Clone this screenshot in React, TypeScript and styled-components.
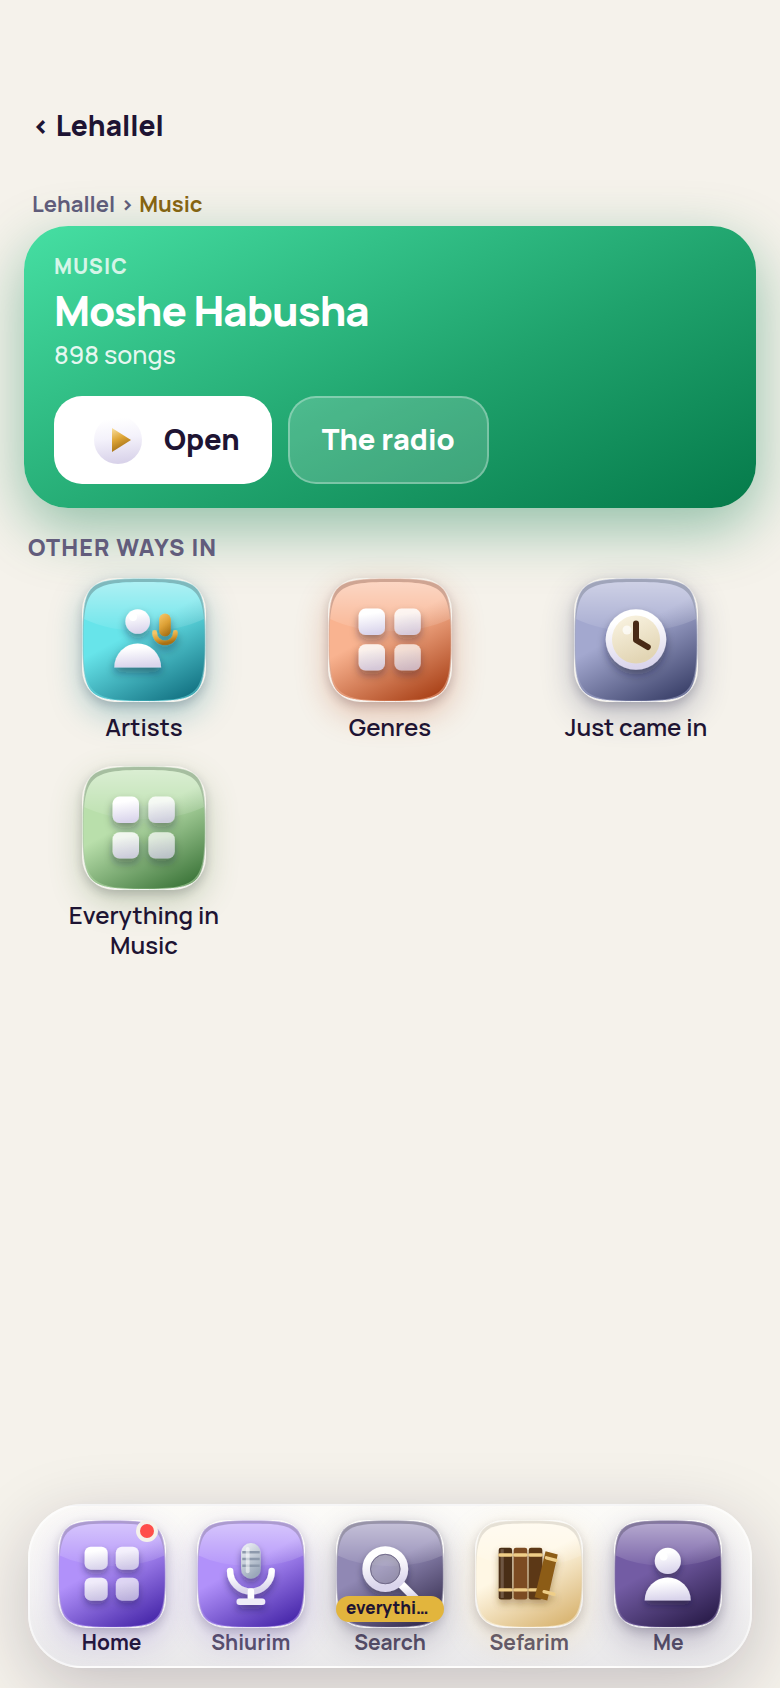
import React, { useId } from "react";
import styled, { createGlobalStyle } from "styled-components";

const GlobalStyle = createGlobalStyle`
  * {
    box-sizing: border-box;
  }

  body {
    margin: 0;
    background: #f5f2eb;
    color: #1e1433;
    font-family: Manrope, Inter, "Noto Sans", sans-serif;
  }

  a {
    color: inherit;
    text-decoration: none;
  }
`;

const Page = styled.div`
  display: flex;
  flex-direction: column;
  min-height: 100vh;
  overflow: hidden;
`;

const Header = styled.header`
  padding: 106px 32px 0;
`;

const BackLink = styled.a`
  font-size: 28px;
  line-height: 38px;
  font-weight: 800;
`;

const Breadcrumb = styled.nav`
  display: flex;
  gap: 5px;
  padding: 45px 32px 7px;
  font-size: 22px;
  line-height: 30px;
  font-weight: 700;
  color: #625c7c;
`;

const Current = styled.span`
  color: #8a6410;
`;

const Hero = styled.section`
  margin: 0 24px;
  padding: 26px 30px 24px;
  border-radius: 44px;
  color: #fff;
  background: linear-gradient(155deg, #46dfa3 0%, #1fa26c 58%, #057a4a 100%);
  box-shadow: 0 20px 60px rgba(5, 122, 74, 0.42);
`;

const Eyebrow = styled.p`
  margin: 0;
  font-size: 21px;
  line-height: 28px;
  font-weight: 800;
  letter-spacing: 0.05em;
  color: rgba(255, 255, 255, 0.78);
`;

const HeroTitle = styled.h1`
  margin: 0;
  font-size: 42px;
  line-height: 60px;
  font-weight: 800;
  letter-spacing: -1px;
`;

const HeroMeta = styled.p`
  margin: 0;
  font-size: 25px;
  line-height: 30px;
  font-weight: 500;
  color: rgba(255, 255, 255, 0.88);
`;

const HeroActions = styled.div`
  display: flex;
  gap: 16px;
  margin-top: 26px;
`;

const HeroButton = styled.button<{ $ghost?: boolean }>`
  display: flex;
  align-items: center;
  gap: 14px;
  height: 88px;
  padding: 0 32px 2px;
  border: ${({ $ghost }) =>
    $ghost ? "2px solid rgba(255, 255, 255, 0.3)" : "none"};
  border-radius: 28px;
  background: ${({ $ghost }) => ($ghost ? "rgba(255, 255, 255, 0.18)" : "#fff")};
  color: ${({ $ghost }) => ($ghost ? "#fff" : "#1e1433")};
  font-family: inherit;
  font-size: 29px;
  font-weight: 800;
  cursor: pointer;
`;

const SectionTitle = styled.h2`
  margin: 24px 28px 0;
  font-size: 23px;
  line-height: 30px;
  font-weight: 800;
  letter-spacing: 0.05em;
  text-transform: uppercase;
  color: #625c7c;
`;

const Grid = styled.main`
  display: grid;
  grid-template-columns: repeat(3, 1fr);
  gap: 24px 14px;
  padding: 16px 28px 40px;
`;

const GridItem = styled.a`
  display: flex;
  flex-direction: column;
  align-items: center;
  gap: 10px;
`;

const GridLabel = styled.span`
  max-width: 180px;
  font-size: 24px;
  line-height: 30px;
  font-weight: 600;
  text-align: center;
`;

const TileSvg = styled.svg<{ $size: number; $glow: string }>`
  display: block;
  width: ${({ $size }) => $size}px;
  height: ${({ $size }) => $size}px;
  border-radius: 26%;
  overflow: visible;
  box-shadow: 0 4px 10px rgba(30, 20, 51, 0.18), 0 12px 32px ${({ $glow }) => $glow};
`;

const TabBar = styled.nav`
  display: flex;
  margin: auto 28px 20px;
  padding: 14px 12px 10px;
  border: 2px solid rgba(255, 255, 255, 0.6);
  border-radius: 54px;
  background: linear-gradient(180deg, #fcfbf8 0%, #f5f4f4 50%, #e9e8ea 100%);
  box-shadow: 0 20px 70px rgba(30, 20, 51, 0.22);
`;

const Tab = styled.a<{ $active?: boolean }>`
  flex: 1;
  display: flex;
  flex-direction: column;
  align-items: center;
  color: ${({ $active }) => ($active ? "#1e1433" : "#575068")};
  font-size: 21px;
  line-height: 28px;
  font-weight: 700;
`;

const TabIcon = styled.span`
  position: relative;
  display: block;
`;

const Dot = styled.span`
  position: absolute;
  top: 0;
  right: 8px;
  width: 22px;
  height: 22px;
  border: 4px solid #f5f2eb;
  border-radius: 50%;
  background: #ff4f4b;
`;

const ScopePill = styled.span`
  position: absolute;
  right: 0;
  bottom: 6px;
  left: 0;
  padding: 0 10px 2px;
  border-radius: 13px;
  background: #e2b53d;
  color: #1e1433;
  font-size: 17px;
  line-height: 24px;
  font-weight: 800;
  white-space: nowrap;
`;

type Palette = {
  light: string;
  dark: string;
  rim: string;
  glow: string;
};

const palettes: Record<string, Palette> = {
  teal: { light: "#67e4ea", dark: "#0e6b7c", rim: "#7fb9bd", glow: "rgba(20, 120, 135, 0.34)" },
  orange: { light: "#f9b390", dark: "#a43a10", rim: "#cfa593", glow: "rgba(190, 80, 35, 0.32)" },
  slate: { light: "#a3a8cf", dark: "#343a63", rim: "#a0a5ba", glow: "rgba(60, 65, 105, 0.32)" },
  green: { light: "#b9dfab", dark: "#356f33", rim: "#a6bea0", glow: "rgba(85, 125, 65, 0.3)" },
  violet: { light: "#b191fa", dark: "#4020a4", rim: "#ac9bcf", glow: "rgba(90, 60, 190, 0.24)" },
  plum: { light: "#9088b4", dark: "#2c2444", rim: "#9894a8", glow: "rgba(50, 40, 80, 0.28)" },
  cream: { light: "#fff7e4", dark: "#d6b06a", rim: "#e5e0d5", glow: "rgba(225, 185, 105, 0.28)" },
  indigo: { light: "#735ca4", dark: "#251844", rim: "#84799d", glow: "rgba(50, 35, 90, 0.28)" },
};

type GlyphName = "artist" | "grid" | "clock" | "mic" | "search" | "books" | "person";

function Glyph({ name, id }: { name: GlyphName; id: string }) {
  const white = `url(#${id}-white)`;
  const gold = `url(#${id}-gold)`;

  switch (name) {
    case "artist":
      return (
        <>
          <circle cx="55.7" cy="43.5" r="12.3" fill={white} />
          <circle cx="51" cy="39" r="4" fill="#fff" />
          <path d="M32.3 89.5a23.4 24 0 0 1 46.8 0z" fill={white} />
          <rect x="77.2" y="35.5" width="11.6" height="23" rx="5.8" fill={gold} />
          <path d="M72.6 54.5a10.4 10.4 0 0 0 20.8 0" fill="none" stroke={gold} strokeWidth="4.8" strokeLinecap="round" />
        </>
      );
    case "grid":
      return (
        <>
          <rect x="30.6" y="30.6" width="26.4" height="26.4" rx="7" fill={white} />
          <rect x="66.4" y="30.6" width="26.4" height="26.4" rx="7" fill={white} opacity="0.84" />
          <rect x="30.6" y="66.2" width="26.4" height="26.4" rx="7" fill={white} opacity="0.84" />
          <rect x="66.4" y="66.2" width="26.4" height="26.4" rx="7" fill={white} opacity="0.7" />
        </>
      );
    case "clock":
      return (
        <>
          <circle cx="62" cy="61.5" r="30.3" fill={white} />
          <circle cx="62" cy="61.5" r="24" fill={`url(#${id}-face)`} />
          <circle cx="53" cy="52" r="4.5" fill="#fff" opacity="0.7" />
          <path d="M62 45.5V62l11.8 7" fill="none" stroke="#4a2c14" strokeWidth="6" strokeLinecap="round" strokeLinejoin="round" />
        </>
      );
    case "mic":
      return (
        <>
          <rect x="50.6" y="26.4" width="22.6" height="41" rx="11.3" fill={`url(#${id}-steel)`} />
          <path d="M52 37h20M52 44.7h20M52 52.6h20" stroke="#8d99ac" strokeWidth="3" />
          <rect x="56" y="31" width="4.4" height="30" rx="2.2" fill="#fff" opacity="0.55" />
          <path d="M38 58.4a23.9 23.9 0 0 0 47.8 0" fill="none" stroke={white} strokeWidth="7.4" strokeLinecap="round" />
          <rect x="58.2" y="78.5" width="7.4" height="15" rx="3" fill="#fff" />
          <rect x="45.4" y="90" width="33" height="7.6" rx="3.8" fill="#efecf8" />
        </>
      );
    case "search":
      return (
        <>
          <circle cx="56.6" cy="56.3" r="18" fill="#fff" opacity="0.2" />
          <path d="M73 72l18 18" stroke={white} strokeWidth="9" strokeLinecap="round" />
          <circle cx="56.6" cy="56.3" r="21.8" fill="none" stroke={white} strokeWidth="9" />
          <circle cx="56.6" cy="56.3" r="17" fill="none" stroke="#6c6685" strokeWidth="1" />
        </>
      );
    case "books":
      return (
        <>
          <rect x="27.2" y="31.8" width="15.4" height="59.4" rx="2.6" fill="#4a2d15" />
          <rect x="29.4" y="33.5" width="3.6" height="56" fill="#fff" opacity="0.2" />
          <rect x="44.4" y="31.8" width="15.6" height="59.4" rx="2.6" fill="#7c4b22" />
          <rect x="61.7" y="31.8" width="15.6" height="59.4" rx="2.6" fill="#5c3914" />
          <path d="M28.5 40.2h13M45.7 40.2h13M63 40.2h13M28.5 80.3h13M45.7 80.3h13M63 80.3h13" stroke="#efce88" strokeWidth="3.8" strokeLinecap="round" />
          <path d="M81 36l14 3.6-12 52.8-14.5-3.6z" fill="#8c5b16" />
          <path d="M82 43.4l11 3M79.3 82.2l11.4 3" stroke="#efce88" strokeWidth="3.8" strokeLinecap="round" />
        </>
      );
    default:
      return (
        <>
          <circle cx="61.8" cy="47" r="15" fill={white} />
          <circle cx="57" cy="42" r="4.5" fill="#fff" />
          <path d="M35.3 92.3a26.4 26.4 0 0 1 52.8 0z" fill={white} />
        </>
      );
  }
}

type TileProps = {
  glyph: GlyphName;
  palette: string;
  size: number;
};

const OUTER =
  "M62 0.5C119 0.5 123.5 5 123.5 62C123.5 119 119 123.5 62 123.5C5 123.5 0.5 119 0.5 62C0.5 5 5 0.5 62 0.5Z";
const INNER =
  "M62 4C115 4 122.5 10 122.5 62C122.5 116 116 122.5 62 122.5C8 122.5 1.5 116 1.5 62C1.5 10 9 4 62 4Z";

function Tile({ glyph, palette, size }: TileProps) {
  const id = useId().replace(/[^a-zA-Z0-9]/g, "");
  const { light, dark, rim, glow } = palettes[palette];

  return (
    <TileSvg viewBox="0 0 124 124" $size={size} $glow={glow} aria-hidden="true">
      <defs>
        <linearGradient id={`${id}-body`} x1="0.22" y1="0" x2="0.8" y2="1.06">
          <stop offset="0.38" stopColor={light} />
          <stop offset="1" stopColor={dark} />
        </linearGradient>
        <linearGradient id={`${id}-rim`} x1="0" y1="0" x2="0" y2="1">
          <stop offset="0.1" stopColor={rim} />
          <stop offset="0.7" stopColor={rim} stopOpacity="0.6" />
          <stop offset="1" stopColor={light} stopOpacity="0.5" />
        </linearGradient>
        <linearGradient id={`${id}-edge`} x1="0" y1="0" x2="0" y2="1">
          <stop offset="0" stopColor="#fff" stopOpacity="0.45" />
          <stop offset="0.6" stopColor="#fff" stopOpacity="0.35" />
          <stop offset="1" stopColor="#fff" stopOpacity="0.85" />
        </linearGradient>
        <linearGradient id={`${id}-gloss`} x1="0" y1="0" x2="0" y2="1">
          <stop offset="0" stopColor="#fff" stopOpacity="0.5" />
          <stop offset="1" stopColor="#fff" stopOpacity="0.06" />
        </linearGradient>
        <linearGradient id={`${id}-white`} x1="0" y1="0" x2="0.15" y2="1">
          <stop offset="0.25" stopColor="#fff" />
          <stop offset="1" stopColor="#dad5ec" />
        </linearGradient>
        <linearGradient id={`${id}-gold`} x1="0.2" y1="0" x2="0.6" y2="1">
          <stop offset="0" stopColor="#f5c566" />
          <stop offset="0.5" stopColor="#dda136" />
          <stop offset="1" stopColor="#a87014" />
        </linearGradient>
        <linearGradient id={`${id}-face`} x1="0" y1="0" x2="0.4" y2="1">
          <stop offset="0" stopColor="#fbf5e4" />
          <stop offset="1" stopColor="#e2d5b4" />
        </linearGradient>
        <linearGradient id={`${id}-steel`} x1="0" y1="0" x2="0.5" y2="1">
          <stop offset="0" stopColor="#f4f6fa" />
          <stop offset="1" stopColor="#9ba8ba" />
        </linearGradient>
        <clipPath id={`${id}-clip`}>
          <path d={INNER} />
        </clipPath>
        <filter id={`${id}-shadow`} x="-30%" y="-30%" width="160%" height="180%">
          <feDropShadow dx="0" dy="5" stdDeviation="4.5" floodColor={palette === "cream" ? "#6d4a1b" : "#1e1433"} floodOpacity="0.42" />
        </filter>
      </defs>
      <path d={OUTER} fill={`url(#${id}-body)`} />
      <path d={OUTER} fill={`url(#${id}-rim)`} stroke={`url(#${id}-edge)`} />
      <path d={INNER} fill={`url(#${id}-body)`} />
      <g clipPath={`url(#${id}-clip)`}>
        <path d="M0 0H124V40Q98 53 62 53T0 40Z" fill={`url(#${id}-gloss)`} />
      </g>
      <g filter={`url(#${id}-shadow)`}>
        <Glyph name={glyph} id={id} />
      </g>
    </TileSvg>
  );
}

function PlayIcon() {
  return (
    <svg width="64" height="64" viewBox="0 0 64 64" aria-hidden="true">
      <defs>
        <linearGradient id="play-disc" x1="0" y1="0" x2="0.1" y2="1">
          <stop offset="0.1" stopColor="#fff" />
          <stop offset="0.5" stopColor="#f4f2fb" />
          <stop offset="1" stopColor="#d9d3ea" />
        </linearGradient>
        <linearGradient id="play-arrow" x1="0" y1="0" x2="0.35" y2="1">
          <stop offset="0" stopColor="#fae0a0" />
          <stop offset="0.5" stopColor="#dea536" />
          <stop offset="1" stopColor="#a06c14" />
        </linearGradient>
      </defs>
      <circle cx="32" cy="33" r="24" fill="url(#play-disc)" />
      <path d="M26 21l19 12-19 12z" fill="url(#play-arrow)" />
    </svg>
  );
}

type Entry = {
  label: string;
  glyph: GlyphName;
  palette: string;
};

const entries: Entry[] = [
  { label: "Artists", glyph: "artist", palette: "teal" },
  { label: "Genres", glyph: "grid", palette: "orange" },
  { label: "Just came in", glyph: "clock", palette: "slate" },
  { label: "Everything in Music", glyph: "grid", palette: "green" },
];

const tabs: Entry[] = [
  { label: "Home", glyph: "grid", palette: "violet" },
  { label: "Shiurim", glyph: "mic", palette: "violet" },
  { label: "Search", glyph: "search", palette: "plum" },
  { label: "Sefarim", glyph: "books", palette: "cream" },
  { label: "Me", glyph: "person", palette: "indigo" },
];

export default function App() {
  return (
    <Page>
      <GlobalStyle />

      <Header>
        <BackLink href="#">‹ Lehallel</BackLink>
      </Header>

      <Breadcrumb aria-label="Breadcrumb">
        <a href="#">Lehallel</a>
        <span>›</span>
        <Current>Music</Current>
      </Breadcrumb>

      <Hero>
        <Eyebrow>MUSIC</Eyebrow>
        <HeroTitle>Moshe Habusha</HeroTitle>
        <HeroMeta>898 songs</HeroMeta>
        <HeroActions>
          <HeroButton type="button">
            <PlayIcon />
            Open
          </HeroButton>
          <HeroButton type="button" $ghost>
            The radio
          </HeroButton>
        </HeroActions>
      </Hero>

      <SectionTitle>Other ways in</SectionTitle>
      <Grid>
        {entries.map((entry) => (
          <GridItem key={entry.label} href="#">
            <Tile glyph={entry.glyph} palette={entry.palette} size={124} />
            <GridLabel>{entry.label}</GridLabel>
          </GridItem>
        ))}
      </Grid>

      <TabBar aria-label="Main">
        {tabs.map((tab) => (
          <Tab key={tab.label} href="#" $active={tab.label === "Home"}>
            <TabIcon>
              <Tile glyph={tab.glyph} palette={tab.palette} size={108} />
              {tab.label === "Home" && <Dot />}
              {tab.label === "Search" && <ScopePill>everythi…</ScopePill>}
            </TabIcon>
            {tab.label}
          </Tab>
        ))}
      </TabBar>
    </Page>
  );
}
